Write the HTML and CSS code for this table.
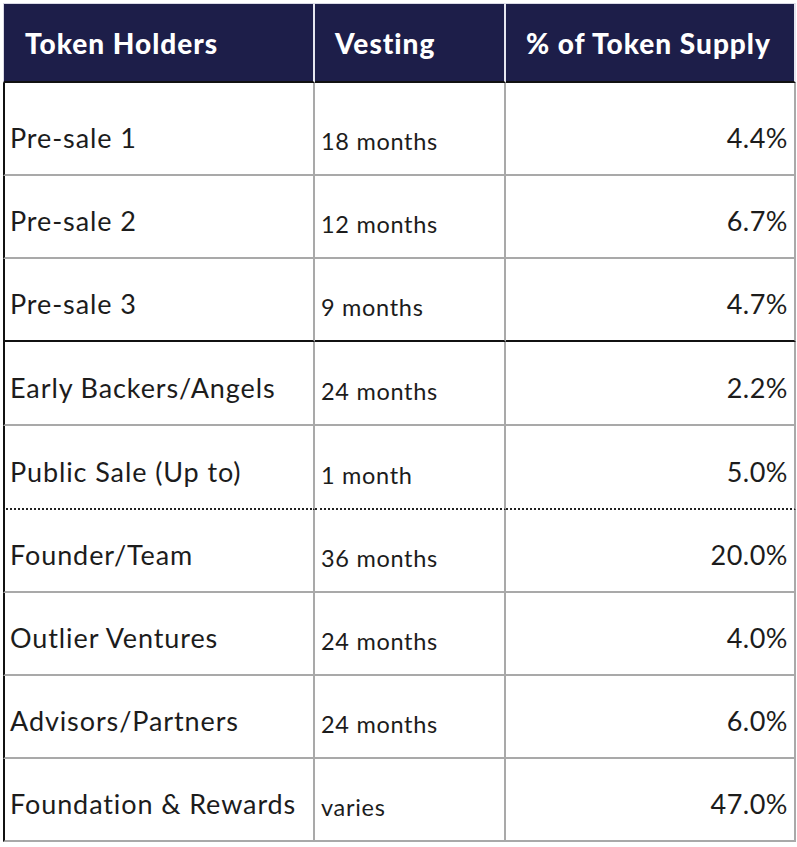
FILE: index.html
```html
<!DOCTYPE html>
<html>
<head>
<meta charset="utf-8">
<link rel="stylesheet" href="styles.css">
</head>
<body>
<div class="sheet">
  <div class="grid" role="table">
    <div class="hcell first-col" role="columnheader">Token Holders</div>
    <div class="hcell" role="columnheader">Vesting</div>
    <div class="hcell" role="columnheader">% of Token Supply</div>

    <div class="cell holder">Pre-sale 1</div>
    <div class="cell vest">18 months</div>
    <div class="cell pct">4.4%</div>

    <div class="cell holder">Pre-sale 2</div>
    <div class="cell vest">12 months</div>
    <div class="cell pct">6.7%</div>

    <div class="cell holder solid-bottom">Pre-sale 3</div>
    <div class="cell vest solid-bottom">9 months</div>
    <div class="cell pct solid-bottom">4.7%</div>

    <div class="cell holder">Early Backers/Angels</div>
    <div class="cell vest">24 months</div>
    <div class="cell pct">2.2%</div>

    <div class="cell holder dotted-bottom">Public Sale (Up to)</div>
    <div class="cell vest dotted-bottom">1 month</div>
    <div class="cell pct dotted-bottom">5.0%</div>

    <div class="cell holder">Founder/Team</div>
    <div class="cell vest">36 months</div>
    <div class="cell pct">20.0%</div>

    <div class="cell holder">Outlier Ventures</div>
    <div class="cell vest">24 months</div>
    <div class="cell pct">4.0%</div>

    <div class="cell holder">Advisors/Partners</div>
    <div class="cell vest">24 months</div>
    <div class="cell pct">6.0%</div>

    <div class="cell holder">Foundation &amp; Rewards</div>
    <div class="cell vest">varies</div>
    <div class="cell pct">47.0%</div>
  </div>
</div>
</body>
</html>
```

FILE: styles.css
```css
html, body {
  margin: 0;
  padding: 0;
  background: #ffffff;
}

.sheet {
  padding: 3px 0 0 3px;
}

.grid {
  display: grid;
  grid-template-columns: 312px 191px 290px;
  grid-template-rows: 80px 93px 83px 83px 84px 84px 83px 83px 83px 83px;
  font-family: Lato, "Liberation Sans", sans-serif;
  color: #1c1c1c;
}

.hcell {
  box-sizing: border-box;
  background: #1d1e49;
  color: #ffffff;
  font-weight: 900;
  font-size: 28px;
  letter-spacing: 1px;
  display: flex;
  align-items: center;
  padding-left: 20px;
  border-top: 1px solid #d9d9e5;
  border-right: 2px solid #e6e6ef;
  border-bottom: 2px solid #111111;
  white-space: nowrap;
}

.hcell.first-col {
  border-left: 1px solid #d9d9e5;
  padding-left: 21px;
}

.cell {
  box-sizing: border-box;
  display: flex;
  align-items: flex-end;
  border-right: 2px solid #a9a9a9;
  border-bottom: 2px solid #a9a9a9;
  white-space: nowrap;
}

.holder {
  border-left: 2px solid #111111;
  font-size: 27px;
  letter-spacing: 0.9px;
  line-height: 32px;
  padding: 0 0 20px 5px;
}

.vest {
  font-size: 23.5px;
  letter-spacing: 0.7px;
  line-height: 28px;
  padding: 0 0 19px 6px;
}

.pct {
  justify-content: flex-end;
  font-size: 27px;
  letter-spacing: 0.5px;
  line-height: 32px;
  padding: 0 6px 20px 0;
}

.cell.solid-bottom {
  border-bottom-color: #111111;
}

.cell.dotted-bottom {
  border-bottom: 2px dotted #222222;
}
```
